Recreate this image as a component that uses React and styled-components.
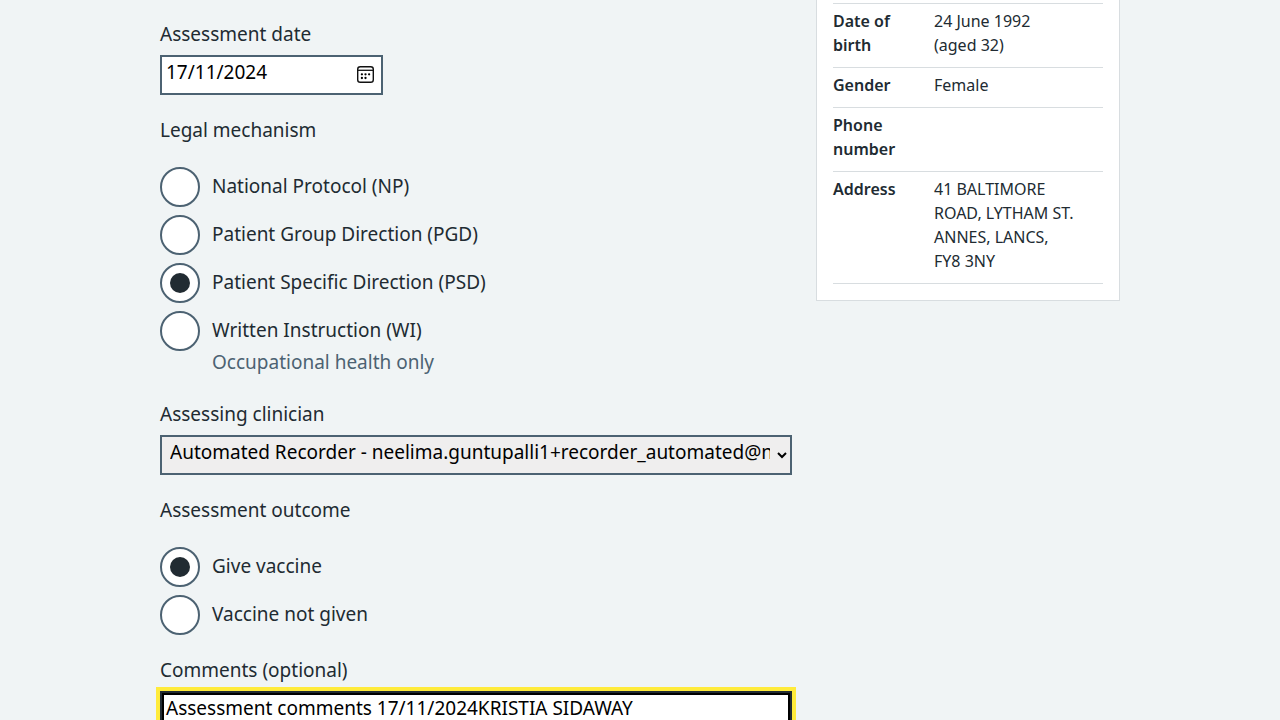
import React from "react";
import styled, { createGlobalStyle, css } from "styled-components";

const ink = "#212b32";
const muted = "#4c6272";
const line = "#d8dde0";

const GlobalStyle = createGlobalStyle`
  *, *::before, *::after { box-sizing: border-box; }
  body {
    margin: 0;
    background: #f0f4f5;
    color: ${ink};
    font-family: "Noto Sans", "Open Sans", sans-serif;
    font-size: 19px;
    line-height: 28px;
  }
`;

const Page = styled.div`
  height: 100vh;
  overflow: hidden;
  padding: 0 32px;
`;

const Container = styled.main`
  display: grid;
  grid-template-columns: minmax(0, 1fr) 304px;
  gap: 24px;
  align-items: start;
  max-width: 960px;
  margin: 0 auto;
`;

const Form = styled.form`
  display: flex;
  flex-direction: column;
  gap: 21px;
  padding-top: 20px;
`;

const Group = styled.div`
  display: flex;
  flex-direction: column;
  align-items: flex-start;
  gap: 7px;
`;

const Label = styled.label`
  display: block;
`;

const Fieldset = styled.fieldset`
  min-width: 0;
  margin: 0;
  padding: 0;
  border: 0;
`;

const Legend = styled.legend`
  padding: 0;
  margin-bottom: 23px;
`;

const control = css`
  border: 2px solid ${muted};
  border-radius: 0;
  color: #000;
  font: inherit;
`;

const DateField = styled.div`
  position: relative;
  width: 223px;
`;

const DateInput = styled.input`
  ${control}
  display: block;
  width: 100%;
  height: 40px;
  padding: 0 36px 6px 4px;
  background: #fff;
`;

const PickerButton = styled.button`
  position: absolute;
  top: 10px;
  right: 8px;
  display: flex;
  padding: 0;
  border: 0;
  background: none;
`;

const Select = styled.select`
  ${control}
  width: 100%;
  height: 40px;
  padding: 0 4px 6px;
  background: #efeeee;
`;

const TextArea = styled.textarea`
  ${control}
  display: block;
  width: 100%;
  padding: 1px 4px;
  background: #fff;
  border-color: ${ink};
  outline: 4px solid #ffeb3b;
  box-shadow: inset 0 0 0 2px #000;
  resize: vertical;
`;

const RadioList = styled.div`
  display: flex;
  flex-direction: column;
  gap: 8px;
`;

const RadioItem = styled.div`
  display: flex;
  align-items: flex-start;
  gap: 12px;
  min-height: 40px;
`;

const RadioInput = styled.input`
  appearance: none;
  display: grid;
  place-items: center;
  flex: none;
  width: 40px;
  height: 40px;
  margin: 0;
  border: 2px solid ${muted};
  border-radius: 50%;
  background: #fff;

  &:checked::before {
    content: "";
    width: 20px;
    height: 20px;
    border-radius: 50%;
    background: ${ink};
  }
`;

const RadioText = styled.div`
  padding: 5px 0 3px;
`;

const Hint = styled.div`
  margin-top: 4px;
  color: ${muted};
`;

const Card = styled.aside`
  padding: 3px 16px 16px;
  border: 1px solid ${line};
  border-top: 0;
  background: #fff;
`;

const SummaryList = styled.dl`
  margin: 0;
  border-top: 1px solid ${line};
  font-size: 16px;
  line-height: 24px;
`;

const SummaryRow = styled.div`
  display: grid;
  grid-template-columns: 77px 1fr;
  gap: 24px;
  padding: 5px 0 10px;
  border-bottom: 1px solid ${line};
`;

const SummaryKey = styled.dt`
  font-weight: 600;
`;

const SummaryValue = styled.dd`
  margin: 0;
`;

function CalendarIcon() {
  return (
    <svg width="19" height="19" viewBox="0 0 19 19" fill="none" aria-hidden="true">
      <rect x="1.7" y="1.7" width="15.6" height="15.6" rx="2.6" stroke="#111" strokeWidth="1.4" />
      <path d="M2 5.3h15" stroke="#111" strokeWidth="1.3" />
      <g fill="#000">
        <circle cx="5.9" cy="9.3" r="1.15" />
        <circle cx="9.5" cy="9.3" r="1.15" />
        <circle cx="13.1" cy="9.3" r="1.15" />
        <circle cx="5.9" cy="13" r="1.15" />
        <circle cx="9.5" cy="13" r="1.15" />
      </g>
    </svg>
  );
}

function Radios({ name, legend, options, selected }) {
  return (
    <Fieldset>
      <Legend>{legend}</Legend>
      <RadioList>
        {options.map(({ value, label, hint }) => {
          const id = `${name}-${value}`;
          return (
            <RadioItem key={value}>
              <RadioInput
                type="radio"
                id={id}
                name={name}
                value={value}
                defaultChecked={value === selected}
                aria-describedby={hint ? `${id}-hint` : undefined}
              />
              <RadioText>
                <Label htmlFor={id}>{label}</Label>
                {hint && <Hint id={`${id}-hint`}>{hint}</Hint>}
              </RadioText>
            </RadioItem>
          );
        })}
      </RadioList>
    </Fieldset>
  );
}

const mechanisms = [
  { value: "np", label: "National Protocol (NP)" },
  { value: "pgd", label: "Patient Group Direction (PGD)" },
  { value: "psd", label: "Patient Specific Direction (PSD)" },
  { value: "wi", label: "Written Instruction (WI)", hint: "Occupational health only" },
];

const outcomes = [
  { value: "give", label: "Give vaccine" },
  { value: "not-given", label: "Vaccine not given" },
];

const patient = [
  ["Date of birth", <>24 June 1992<br />(aged 32)</>],
  ["Gender", "Female"],
  ["Phone number", ""],
  ["Address", <>41 BALTIMORE<br />ROAD, LYTHAM ST.<br />ANNES, LANCS,<br />FY8 3NY</>],
];

export default function App() {
  return (
    <Page>
      <GlobalStyle />
      <Container>
        <Form>
          <Group>
            <Label htmlFor="assessment-date">Assessment date</Label>
            <DateField>
              <DateInput id="assessment-date" type="text" defaultValue="17/11/2024" />
              <PickerButton type="button" aria-label="Open calendar">
                <CalendarIcon />
              </PickerButton>
            </DateField>
          </Group>

          <Radios name="mechanism" legend="Legal mechanism" options={mechanisms} selected="psd" />

          <Group>
            <Label htmlFor="clinician">Assessing clinician</Label>
            <Select id="clinician">
              <option>Automated Recorder - neelima.guntupalli1+recorder_automated@nhs.net</option>
            </Select>
          </Group>

          <Radios name="outcome" legend="Assessment outcome" options={outcomes} selected="give" />

          <Group>
            <Label htmlFor="comments">Comments (optional)</Label>
            <TextArea id="comments" rows={5} defaultValue="Assessment comments 17/11/2024KRISTIA SIDAWAY" />
          </Group>
        </Form>

        <Card>
          <SummaryList>
            {patient.map(([key, value]) => (
              <SummaryRow key={key}>
                <SummaryKey>{key}</SummaryKey>
                <SummaryValue>{value}</SummaryValue>
              </SummaryRow>
            ))}
          </SummaryList>
        </Card>
      </Container>
    </Page>
  );
}
